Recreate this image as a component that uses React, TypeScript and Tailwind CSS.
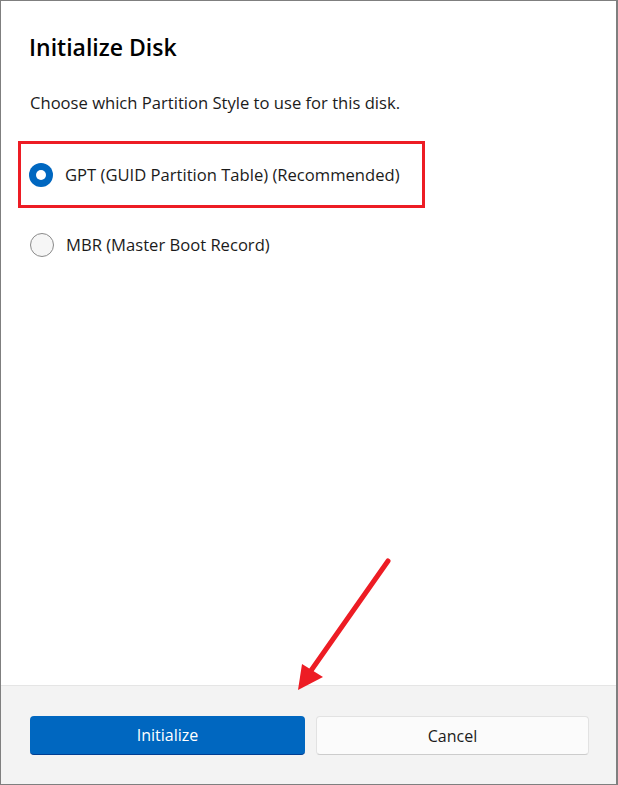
export default function App() {
  return (
    <div className="relative flex h-[785px] w-[618px] flex-col border-t border-l border-r-2 border-b border-[#7f7f7f] bg-white font-['Open_Sans',sans-serif] text-[#1b1b1b]">
      <div className="flex-1 pl-[28px] pt-[30px]">
        <h1 className="text-[23px] font-semibold leading-[32px] text-black">Initialize Disk</h1>
        <p className="ml-[1px] mt-[28px] text-[16.6px] leading-[24px]">
          Choose which Partition Style to use for this disk.
        </p>

        <div className="-ml-[11px] mt-[26px] flex h-[67px] w-[407px] items-center gap-[12px] border-[3px] border-[#ed1c24] pl-[8px]">
          <span className="flex h-[24px] w-[24px] items-center justify-center rounded-full bg-[#0067c0]">
            <span className="h-[10px] w-[10px] rounded-full bg-white" />
          </span>
          <span className="text-[16.6px] leading-[24px]">GPT (GUID Partition Table) (Recommended)</span>
        </div>

        <div className="ml-[1px] mt-[25px] flex items-center gap-[12px]">
          <span className="h-[24px] w-[24px] rounded-full border border-[#8a8a8a] bg-[#f6f6f6]" />
          <span className="text-[16.6px] leading-[24px]">MBR (Master Boot Record)</span>
        </div>
      </div>

      <div className="grid h-[99px] grid-cols-[275px_273px] gap-[11px] border-t border-[#e5e5e5] bg-[#f3f3f3] pl-[29px] pt-[30px]">
        <button className="h-[39px] rounded-[4px] border-b border-[#003e92] bg-[#0067c0] text-[16px] text-white">
          Initialize
        </button>
        <button className="h-[39px] rounded-[4px] border border-[#e2e2e2] border-b-[#cccccc] bg-[#fbfbfb] text-[16px] text-[#1b1b1b]">
          Cancel
        </button>
      </div>

      <svg className="pointer-events-none absolute left-[-1px] top-[-1px]" width="618" height="785">
        <line x1="388" y1="561" x2="310" y2="672" stroke="#ed1c24" strokeWidth="5" strokeLinecap="round" />
        <polygon points="298,690 302,664 323,677" fill="#ed1c24" />
      </svg>
    </div>
  );
}
